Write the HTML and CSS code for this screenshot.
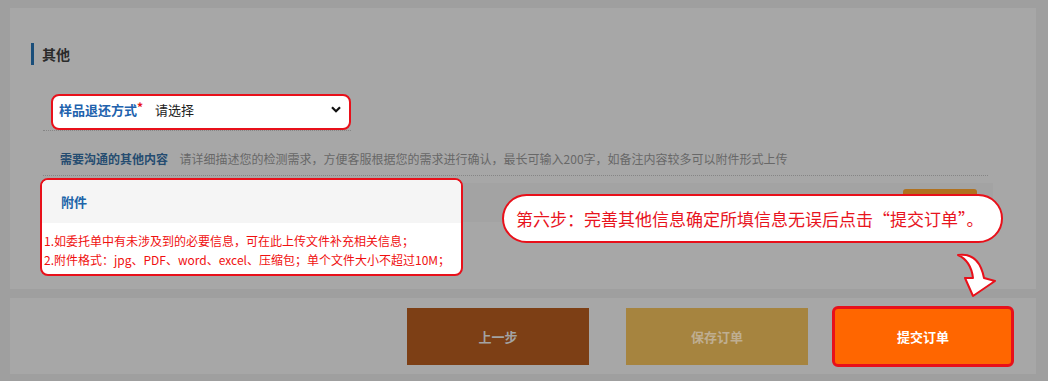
FILE: index.html
```html
<!DOCTYPE html>
<html lang="zh-CN">
  <head>
    <meta charset="UTF-8">
    <meta name="viewport" content="width=device-width, initial-scale=1.0">
    <title>提交订单</title>
    <link rel="stylesheet" href="styles.css">
  </head>
  <body>
    <div class="card">
      <div class="section-title">其他</div>

      <div class="form">
        <div class="row-select">
          <div class="select-box">
            <span class="field-label">样品退还方式<em>*</em></span>
            <span class="select-value">请选择</span>
            <svg class="chevron" width="10" height="7" viewBox="0 0 10 7">
              <path d="M1 1.2 L5 5.2 L9 1.2" fill="none" stroke="#111" stroke-width="2.2"/>
            </svg>
          </div>
        </div>

        <div class="row-note">
          <span class="note-label">需要沟通的其他内容</span>
          <span class="note-hint">请详细描述您的检测需求，方便客服根据您的需求进行确认，最长可输入200字，如备注内容较多可以附件形式上传</span>
        </div>

        <div class="attach-wrap">
          <div class="attach-bar">
            <span class="upload-button"></span>
          </div>

          <!-- highlighted attachment panel -->
          <div class="attach-box">
            <div class="attach-head">附件</div>
            <div class="attach-body">
              <p>1.如委托单中有未涉及到的必要信息，可在此上传文件补充相关信息；</p>
              <p>2.附件格式：jpg、PDF、word、excel、压缩包；单个文件大小不超过10M；</p>
            </div>
          </div>
        </div>
      </div>

      <div class="callout">第六步：完善其他信息确定所填信息无误后点击“提交订单”。</div>

      <svg class="arrow" width="50" height="50" viewBox="0 0 50 50">
        <path d="M8 5 Q29 2 34 28 L45 31 L23 46 L15 28 L23 28 Q21 11 8 5 Z" fill="#fff" stroke="#e8101a" stroke-width="2" stroke-linejoin="round"/>
      </svg>
    </div>

    <div class="footer">
      <button class="btn btn-prev">上一步</button>
      <button class="btn btn-save">保存订单</button>
      <button class="btn btn-submit">提交订单</button>
    </div>
  </body>
</html>
```

FILE: styles.css
```css
body {
  font-family: "Noto Sans CJK SC", "Noto Sans", "Liberation Sans", sans-serif;
  background: #9f9f9f;
  color: #2b2b2b;
  margin: 0;
  padding: 8px 12px 7px 10px;
}

.card {
  position: relative;
  width: 1026px;
  height: 281px;
  box-sizing: border-box;
  background: #a7a7a7;
  padding-top: 35px;
}

.section-title {
  margin-left: 21px;
  border-left: 3px solid #1a4e7a;
  padding-left: 8px;
  height: 22px;
  line-height: 22px;
  font-size: 14px;
  font-weight: 700;
  color: #2b2b2b;
}

.form {
  margin-left: 33px;
  width: 945px;
}

.row-select {
  width: 308px;
  margin-top: 29px;
  padding-left: 8px;
  box-sizing: border-box;
  border-bottom: 1px dotted #858585;
}

.select-box {
  display: flex;
  align-items: center;
  height: 36px;
  box-sizing: border-box;
  background: #fff;
  border: 2px solid #e8101a;
  border-radius: 8px;
  padding: 0 8px 6px 6px;
}

.field-label {
  width: 96px;
  font-size: 13px;
  font-weight: 700;
  color: #2162ad;
}

.field-label em {
  font-style: normal;
  color: #e8101a;
  font-size: 12px;
  vertical-align: top;
  line-height: 14px;
}

.select-value {
  font-size: 13px;
  color: #222;
}

.chevron {
  margin-left: auto;
}

.row-note {
  padding: 16px 0 6px 17px;
  line-height: 20px;
  border-bottom: 1px dotted #858585;
  white-space: nowrap;
}

.note-label {
  font-size: 12px;
  font-weight: 700;
  color: #254c70;
  margin-right: 8px;
}

.note-hint {
  font-size: 12px;
  color: #686868;
}

.attach-wrap {
  position: relative;
  margin-top: 7px;
}

.attach-bar {
  display: flex;
  justify-content: flex-end;
  align-items: flex-start;
  width: 950px;
  height: 39px;
  background: #a3a3a3;
  padding-right: 16px;
  box-sizing: border-box;
}

.upload-button {
  width: 74px;
  height: 30px;
  margin-top: 6px;
  background: #b0711f;
  border-radius: 3px;
}

.attach-box {
  position: absolute;
  left: -3px;
  top: -5px;
  width: 423px;
  height: 98px;
  box-sizing: border-box;
  background: #fff;
  border: 2px solid #e8101a;
  border-radius: 8px;
  overflow: hidden;
}

.attach-head {
  height: 43px;
  line-height: 43px;
  background: #f5f5f5;
  padding-left: 19px;
  font-size: 13px;
  font-weight: 700;
  color: #2064a8;
}

.attach-body {
  padding: 8px 0 0 2px;
}

.attach-body p {
  margin: 0;
  font-size: 12px;
  line-height: 19px;
  color: #f01010;
  white-space: nowrap;
}

.callout {
  position: absolute;
  left: 492px;
  top: 186px;
  width: 501px;
  height: 49px;
  box-sizing: border-box;
  background: #fff;
  border: 2px solid #e8101a;
  border-radius: 25px;
  padding-left: 12px;
  line-height: 45px;
  font-size: 17px;
  color: #e8141e;
  white-space: nowrap;
}

.arrow {
  position: absolute;
  left: 940px;
  top: 242px;
}

.footer {
  display: flex;
  justify-content: flex-end;
  align-items: center;
  width: 1026px;
  height: 76px;
  margin-top: 9px;
  box-sizing: border-box;
  background: #a7a7a7;
  padding-right: 22px;
}

.btn {
  width: 182px;
  height: 57px;
  border: none;
  font-family: inherit;
  font-size: 13px;
  font-weight: 700;
  cursor: pointer;
}

.btn-prev {
  background: #7d3f15;
  color: #a3a3a3;
  margin-right: 37px;
}

.btn-save {
  background: #a6843f;
  color: #bfae91;
  margin-right: 24px;
}

.btn-submit {
  height: 61px;
  background: #ff6600;
  color: #fff;
  border: 3px solid #e8101a;
  border-radius: 6px;
}
```
